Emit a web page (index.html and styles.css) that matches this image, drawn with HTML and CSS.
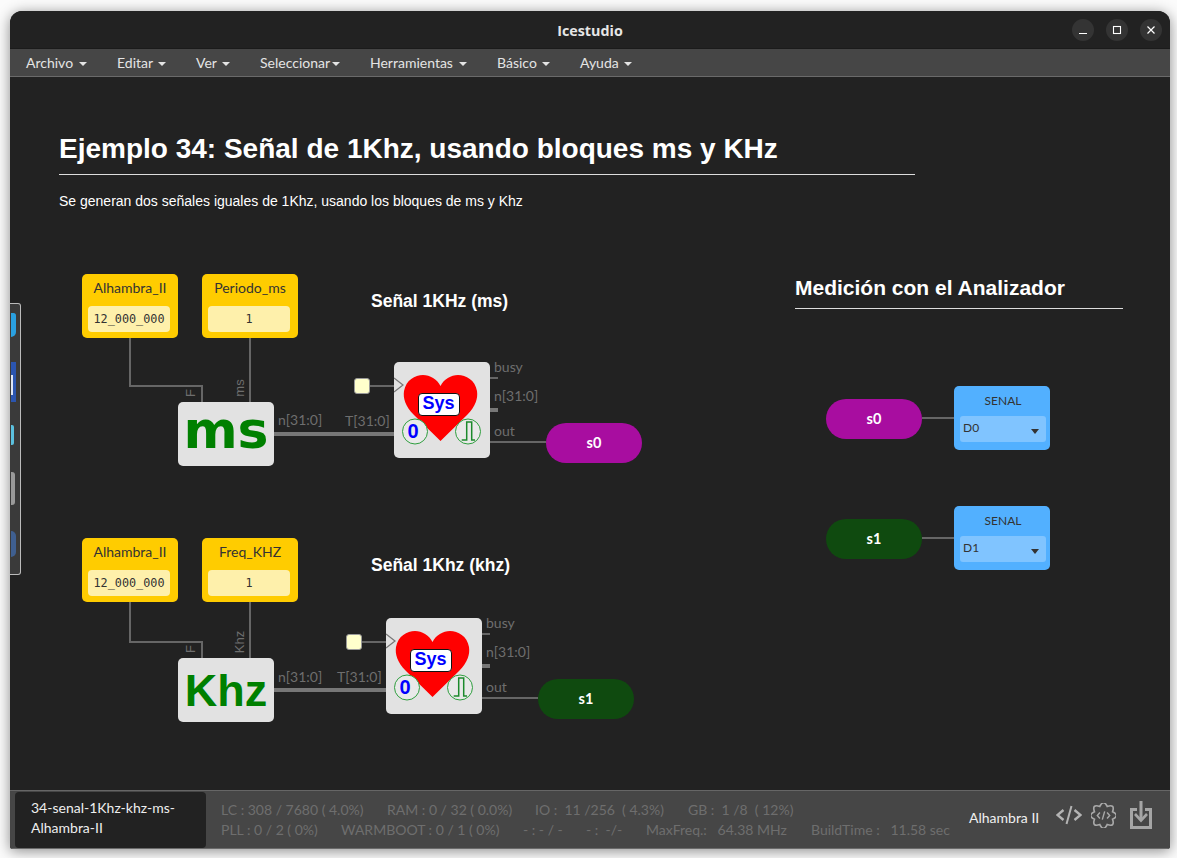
FILE: index.html
```html
<!DOCTYPE html>
<html lang="en">
<head>
    <meta charset="UTF-8">
    <meta name="viewport" content="width=device-width, initial-scale=1.0">
    <title>Icestudio</title>
    <link rel="stylesheet" href="styles.css">
</head>
<body>
    <div class="dock">
        <span class="dock-icon dock-a"></span>
        <span class="dock-icon dock-b"></span>
        <span class="dock-icon dock-c"></span>
        <span class="dock-icon dock-d"></span>
        <span class="dock-icon dock-e"></span>
    </div>

    <div class="window">
        <header class="titlebar">
            <span class="title">Icestudio</span>
            <div class="win-buttons">
                <button class="win-btn"><svg width="10" height="10" viewBox="0 0 10 10"><path d="M1 8.5h8" stroke="#fff" stroke-width="1.2"/></svg></button>
                <button class="win-btn"><svg width="10" height="10" viewBox="0 0 10 10"><rect x="1.5" y="1.5" width="7" height="7" fill="none" stroke="#fff" stroke-width="1.1"/></svg></button>
                <button class="win-btn"><svg width="10" height="10" viewBox="0 0 10 10"><path d="M1.5 1.5l7 7M8.5 1.5l-7 7" stroke="#fff" stroke-width="1.2"/></svg></button>
            </div>
        </header>

        <nav class="menubar">
            <a class="menu-item menu-archivo">Archivo <i class="caret"></i></a>
            <a class="menu-item menu-editar">Editar <i class="caret"></i></a>
            <a class="menu-item menu-ver">Ver <i class="caret"></i></a>
            <a class="menu-item menu-selec">Seleccionar<i class="caret"></i></a>
            <a class="menu-item menu-herr">Herramientas <i class="caret"></i></a>
            <a class="menu-item menu-basico">Básico <i class="caret"></i></a>
            <a class="menu-item">Ayuda <i class="caret"></i></a>
        </nav>

        <main class="canvas">
            <svg class="wires" width="1160" height="713" viewBox="10 77 1160 713" fill="none">
                <g stroke="#666" stroke-width="2">
                    <path d="M130 338V386H202V402"/>
                    <path d="M250 338V402"/>
                    <path d="M370 386H394"/>
                    <path d="M490 378H498"/>
                    <path d="M490 442H546"/>
                    <path d="M130 602V642H202V658"/>
                    <path d="M250 602V658"/>
                    <path d="M362 642H386"/>
                    <path d="M482 634H490"/>
                    <path d="M482 698H538"/>
                    <path d="M922 418H954"/>
                    <path d="M922 538H954"/>
                </g>
                <g stroke="#777" stroke-width="4">
                    <path d="M274 434H394"/>
                    <path d="M490 410H498"/>
                    <path d="M274 690H386"/>
                    <path d="M482 666H490"/>
                </g>
            </svg>

            <section class="note note-title">
                <h1>Ejemplo 34: Señal de 1Khz, usando bloques ms y KHz</h1>
                <p>Se generan dos señales iguales de 1Khz, usando los bloques de ms y Khz</p>
            </section>
            <h2 class="note-measure">Medición con el Analizador</h2>
            <h3 class="note-sub sub-ms">Señal 1KHz (ms)</h3>
            <h3 class="note-sub sub-khz">Señal 1Khz (khz)</h3>

            <div class="block constant c1"><span class="block-name">Alhambra_II</span><span class="const-value">12_000_000</span></div>
            <div class="block constant c2"><span class="block-name">Periodo_ms</span><span class="const-value">1</span></div>
            <div class="block constant c3"><span class="block-name">Alhambra_II</span><span class="const-value">12_000_000</span></div>
            <div class="block constant c4"><span class="block-name">Freq_KHZ</span><span class="const-value">1</span></div>

            <div class="block icon-block b-ms"><span class="word-ms">ms</span></div>
            <div class="block icon-block b-khz"><span class="word-khz">Khz</span></div>

            <div class="block timer t1">
                <svg class="timer-art" width="96" height="96" viewBox="0 0 96 96" fill="none">
                    <path d="M46.5 79L20 53C11 44 9 36 10 29C12 18 21 13 29 13C36 13 43 17 46.5 24C50 17 57 13 64 13C72 13 81 18 83 29C84 36 82 44 73 53Z" fill="#f00"/>
                    <path d="M0 16L9 23L0 30" stroke="#777" stroke-width="1.2"/>
                    <circle cx="21" cy="69.5" r="12.5" fill="#e9e9e9" stroke="#2e9e3e" stroke-width="1"/>
                    <circle cx="74" cy="69.5" r="12.5" fill="#e9e9e9" stroke="#2e9e3e" stroke-width="1"/>
                    <path d="M67.700 78H72.700V60H77.700V78H81" stroke="#1c8a2c" stroke-width="1.500"/>
                </svg>
                <span class="sys-label">Sys</span>
                <span class="zero-label">0</span>
            </div>
            <div class="block timer t2">
                <svg class="timer-art" width="96" height="96" viewBox="0 0 96 96" fill="none">
                    <path d="M46.5 79L20 53C11 44 9 36 10 29C12 18 21 13 29 13C36 13 43 17 46.5 24C50 17 57 13 64 13C72 13 81 18 83 29C84 36 82 44 73 53Z" fill="#f00"/>
                    <path d="M0 16L9 23L0 30" stroke="#777" stroke-width="1.2"/>
                    <circle cx="21" cy="69.5" r="12.5" fill="#e9e9e9" stroke="#2e9e3e" stroke-width="1"/>
                    <circle cx="74" cy="69.5" r="12.5" fill="#e9e9e9" stroke="#2e9e3e" stroke-width="1"/>
                    <path d="M67.700 78H72.700V60H77.700V78H81" stroke="#1c8a2c" stroke-width="1.500"/>
                </svg>
                <span class="sys-label">Sys</span>
                <span class="zero-label">0</span>
            </div>

            <span class="in-square sq1"></span>
            <span class="in-square sq2"></span>

            <div class="pill pill-purple p1">s0</div>
            <div class="pill pill-green p2">s1</div>
            <div class="pill pill-purple p3">s0</div>
            <div class="pill pill-green p4">s1</div>

            <div class="block output o1"><span class="output-name">SENAL</span><div class="pin-select"><span class="pin-text">D0</span><i class="pin-caret"></i></div></div>
            <div class="block output o2"><span class="output-name">SENAL</span><div class="pin-select"><span class="pin-text">D1</span><i class="pin-caret"></i></div></div>

            <span class="port l-n1">n[31:0]</span>
            <span class="port l-t1">T[31:0]</span>
            <span class="port l-busy1">busy</span>
            <span class="port l-no1">n[31:0]</span>
            <span class="port l-out1">out</span>
            <span class="port l-n2">n[31:0]</span>
            <span class="port l-t2">T[31:0]</span>
            <span class="port l-busy2">busy</span>
            <span class="port l-no2">n[31:0]</span>
            <span class="port l-out2">out</span>
            <span class="port vert l-f1">F</span>
            <span class="port vert l-ms">ms</span>
            <span class="port vert l-f2">F</span>
            <span class="port vert l-khz">Khz</span>
        </main>

        <footer class="statusbar">
            <div class="file-name">34-senal-1Khz-khz-ms-<br>Alhambra-II</div>
            <div class="stats">
                <div class="stats-row">
                    <span class="s-lc">LC : 308 / 7680 ( 4.0%)</span>
                    <span class="s-ram">RAM : 0 / 32 ( 0.0%)</span>
                    <span class="s-io">IO :  11 /256  ( 4.3%)</span>
                    <span>GB :  1 /8  ( 12%)</span>
                </div>
                <div class="stats-row">
                    <span class="s-pll">PLL : 0 / 2 ( 0%)</span>
                    <span class="s-warm">WARMBOOT : 0 / 1 ( 0%)</span>
                    <span class="s-dash1">- : - / -</span>
                    <span class="s-dash2">- :  -/-</span>
                    <span class="s-max">MaxFreq.:   64.38 MHz</span>
                    <span>BuildTime :   11.58 sec</span>
                </div>
            </div>
            <span class="board-name">Alhambra II</span>
            <div class="tools">
                <svg class="tool-code" width="26" height="20" viewBox="0 0 26 20" fill="none" stroke="#b4b4b4" stroke-width="2.4"><path d="M7.500 5L1.500 10L7.500 15M18.500 5L24.500 10L18.500 15"/><path d="M15.500 1L10.500 19" stroke-width="2"/></svg>
                <svg class="tool-gear" width="25" height="25" viewBox="1.500 1.500 21 21" fill="none" stroke="#a8a8a8" stroke-width="1.400"><path d="M19.600 8.900Q26 12 19.600 15.100Q21.900 21.900 15.100 19.600Q12 26 8.900 19.600Q2.100 21.900 4.400 15.100Q-2 12 4.400 8.900Q2.100 2.100 8.900 4.400Q12 -2 15.100 4.400Q21.900 2.100 19.600 8.900Z"/><path d="M9 9.500L6.800 12L9 14.500M15 9.500L17.200 12L15 14.500M13 8.500L11 15.500" stroke-width="1.200"/></svg>
                <svg class="tool-save" width="24" height="30" viewBox="0 0 24 30" fill="none" stroke="#a5a5a5" stroke-width="3"><path d="M8 9.500H2.500V27.500H21.500V9.500H16"/><path d="M12 1V19" /><path d="M6 14L12 20.500L18 14" stroke-width="2.600"/></svg>
            </div>
        </footer>
    </div>
</body>
</html>
```
FILE: styles.css
```css
* {
    box-sizing: border-box;
}
body {
    margin: 0;
    height: 858px;
    padding: 11px 7px 9px 10px;
    background: #fbfbfb;
    font-family: Lato, sans-serif;
    overflow: hidden;
}
.window {
    width: 1160px;
    height: 838px;
    display: flex;
    flex-direction: column;
    background: #222;
    border-radius: 12px 12px 3px 3px;
    box-shadow: 0 2px 14px rgba(0, 0, 0, 0.45);
    overflow: hidden;
}

/* title bar */
.titlebar {
    height: 38px;
    flex: none;
    display: flex;
    align-items: center;
    justify-content: flex-end;
    position: relative;
    background: #222;
    border-bottom: 1px solid #1b1b1b;
    padding: 0 8px 0 0;
}
.title {
    position: absolute;
    left: 0;
    right: 0;
    margin-top: 2px;
    text-align: center;
    color: #e6e6e6;
    font-family: "Open Sans", sans-serif;
    font-size: 14.3px;
    font-weight: 700;
}
.win-buttons {
    display: flex;
    gap: 12px;
}
.win-btn {
    width: 22px;
    height: 22px;
    padding: 0;
    border: none;
    border-radius: 50%;
    background: #343434;
    display: flex;
    align-items: center;
    justify-content: center;
}

/* menu */
.menubar {
    height: 28px;
    flex: none;
    display: flex;
    align-items: center;
    padding-left: 16px;
    background: #464646;
    border-bottom: 1px solid #6a6a6a;
    color: #e4e4e4;
    font-size: 14px;
}
.menu-item {
    white-space: nowrap;
}
.menu-archivo { width: 91px; }
.menu-editar { width: 79px; }
.menu-ver { width: 64px; }
.menu-selec { width: 110px; }
.menu-herr { width: 127px; }
.menu-basico { width: 83px; }
.caret {
    display: inline-block;
    width: 0;
    height: 0;
    margin-left: 2px;
    vertical-align: 2px;
    border-top: 4px solid #e4e4e4;
    border-left: 4px solid transparent;
    border-right: 4px solid transparent;
}

/* canvas: blocks sit on a free drawing surface, page x-10 / y-77 */
.canvas {
    flex: 1;
    position: relative;
    background: #222;
}
.wires {
    position: absolute;
    left: 0;
    top: 0;
}
.note-title {
    position: absolute;
    left: 49px;
    top: 53px;
    width: 856px;
    color: #fff;
    font-family: "Liberation Sans", Arial, sans-serif;
}
.note-title h1 {
    margin: 0;
    height: 45px;
    border-bottom: 1px solid #ddd;
    font-size: 28px;
    line-height: 38px;
}
.note-title p {
    margin: 16px 0 0;
    font-size: 14px;
    line-height: 20px;
}
.note-measure {
    position: absolute;
    left: 785px;
    top: 196px;
    width: 328px;
    height: 36px;
    margin: 0;
    border-bottom: 1px solid #ddd;
    color: #fff;
    font-family: "Liberation Sans", Arial, sans-serif;
    font-size: 21px;
    line-height: 30px;
}
.note-sub {
    position: absolute;
    left: 361px;
    margin: 0;
    color: #fff;
    font-family: "Liberation Sans", Arial, sans-serif;
    font-size: 17.5px;
    line-height: 22px;
}
.sub-ms { top: 213px; }
.sub-khz { top: 477px; }

.block {
    position: absolute;
    width: 96px;
    border-radius: 5px;
}
.constant {
    height: 64px;
    padding: 5px 6px 6px;
    display: flex;
    flex-direction: column;
    justify-content: space-between;
    align-items: stretch;
    background: #fc0;
    color: #333;
    text-align: center;
}
.block-name {
    font-size: 14px;
    line-height: 17px;
}
.const-value {
    height: 26px;
    margin-right: 2px;
    background: #fef0ab;
    border-radius: 4px;
    font-family: "DejaVu Sans Mono", monospace;
    font-size: 11.8px;
    line-height: 26px;
}
.c1 { left: 72px; top: 197px; }
.c2 { left: 192px; top: 197px; }
.c3 { left: 72px; top: 461px; }
.c4 { left: 192px; top: 461px; }

.icon-block {
    height: 64px;
    background: #e2e2e2;
    color: #008000;
    font-weight: 700;
    text-align: center;
}
.word-ms {
    display: block;
    font-family: "DejaVu Sans", sans-serif;
    font-size: 52px;
    line-height: 56px;
}
.word-khz {
    display: block;
    font-family: "Liberation Sans", sans-serif;
    font-size: 45px;
    line-height: 65px;
}
.b-ms { left: 168px; top: 325px; }
.b-khz { left: 168px; top: 581px; }

.timer {
    height: 96px;
    background: #e2e2e2;
    font-family: "Liberation Sans", sans-serif;
    font-weight: 700;
    color: #00f;
}
.t1 { left: 384px; top: 285px; }
.t2 { left: 376px; top: 541px; }
.timer-art {
    display: block;
}
.sys-label {
    position: absolute;
    left: 23.500px;
    top: 30.500px;
    width: 42px;
    height: 23px;
    background: #fff;
    border: 1.5px solid #111;
    border-radius: 4px;
    font-size: 18px;
    line-height: 18px;
    text-align: center;
}
.zero-label {
    position: absolute;
    left: 9px;
    top: 58px;
    width: 20px;
    font-size: 20px;
    line-height: 23px;
    text-align: center;
}
.in-square {
    position: absolute;
    width: 16px;
    height: 16px;
    background: #ffffcc;
    border: 1px solid #999;
    border-radius: 3px;
}
.sq1 { left: 344px; top: 301px; }
.sq2 { left: 336px; top: 557px; }

.pill {
    position: absolute;
    width: 96px;
    height: 40px;
    border-radius: 20px;
    color: #fff;
    font-size: 14.5px;
    font-weight: 700;
    line-height: 40px;
    text-align: center;
}
.pill-purple { background: #a80da0; }
.pill-green { background: #0f4a0f; }
.p1 { left: 536px; top: 346px; }
.p2 { left: 528px; top: 602px; }
.p3 { left: 816px; top: 322px; }
.p4 { left: 816px; top: 442px; }

.output {
    height: 64px;
    padding: 7px 4px 8px 6px;
    display: flex;
    flex-direction: column;
    justify-content: space-between;
    background: #52b0ff;
    color: #333;
}
.output-name {
    font-size: 12px;
    line-height: 15px;
    text-align: center;
}
.pin-select {
    height: 26px;
    padding: 0 7px 0 3px;
    display: flex;
    align-items: center;
    justify-content: space-between;
    background: #80c4ff;
    border-radius: 3px;
    font-size: 12px;
}
.pin-text {
    margin-bottom: 3px;
}
.pin-caret {
    margin-top: 4px;
    border-top: 5px solid #333;
    border-left: 4px solid transparent;
    border-right: 4px solid transparent;
}
.o1 { left: 944px; top: 309px; }
.o2 { left: 944px; top: 429px; }

.port {
    position: absolute;
    color: #6e6e6e;
    font-size: 14px;
    line-height: 16px;
    white-space: nowrap;
}
.vert {
    transform: translate(-50%, -50%) rotate(-90deg);
    font-family: "Liberation Sans", sans-serif;
    font-size: 13px;
}
.l-n1 { left: 268px; top: 335px; }
.l-t1 { left: 335px; top: 336px; }
.l-busy1 { left: 484px; top: 282px; }
.l-no1 { left: 484px; top: 311px; }
.l-out1 { left: 484px; top: 346px; }
.l-n2 { left: 268px; top: 592px; }
.l-t2 { left: 327px; top: 592px; }
.l-busy2 { left: 476px; top: 538px; }
.l-no2 { left: 476px; top: 567px; }
.l-out2 { left: 476px; top: 602px; }
.l-f1 { left: 181px; top: 316px; }
.l-ms { left: 230px; top: 311px; }
.l-f2 { left: 181px; top: 572px; }
.l-khz { left: 230px; top: 565px; }

/* status bar */
.statusbar {
    height: 59px;
    flex: none;
    display: flex;
    align-items: center;
    padding: 0 17px 0 5px;
    background: #464646;
    border-top: 1px solid #666;
    border-bottom: 1px solid #6a6a6a;
}
.file-name {
    width: 191px;
    height: 56px;
    padding: 6px 0 0 16px;
    background: #222;
    border-radius: 4px;
    color: #eee;
    font-size: 14px;
    line-height: 20px;
}
.stats {
    width: 748px;
    margin-left: 15px;
    color: #6e6e6e;
    font-size: 14px;
    line-height: 20px;
}
.stats-row {
    display: flex;
}
.stats-row span {
    white-space: pre;
}
.s-lc { width: 166px; }
.s-ram { width: 148px; }
.s-io { width: 153px; }
.s-pll { width: 120px; }
.s-warm { width: 182px; }
.s-dash1 { width: 63px; }
.s-dash2 { width: 60px; }
.s-max { width: 165px; }
.board-name {
    margin-bottom: 4px;
    color: #f0f0f0;
    font-size: 14px;
}
.tools {
    margin-left: auto;
    margin-bottom: 9px;
    display: flex;
    align-items: center;
}
.tool-gear {
    margin-left: 9px;
}
.tool-save {
    margin-left: 13px;
}

/* sliver of the desktop dock over the window edge */
.dock {
    position: absolute;
    left: 10px;
    top: 303px;
    width: 11px;
    height: 272px;
    display: flex;
    flex-direction: column;
    align-items: flex-start;
    padding-left: 1px;
    background: #3a3a3a;
    border: 1px solid #bbb;
    border-left: none;
    border-radius: 0 3px 3px 0;
    z-index: 5;
}
.dock-icon {
    display: block;
}
.dock-a { width: 5px; height: 24px; margin-top: 9px; background: #2aa0e0; border-radius: 0 4px 8px 0; }
.dock-b { width: 5px; height: 40px; margin-top: 25px; background: linear-gradient(#dfe6f5, #dfe6f5) 0 13px / 2px 20px no-repeat, #2b55b0; }
.dock-c { width: 3px; height: 20px; margin-top: 23px; background: #5bc0de; border-radius: 0 2px 2px 0; }
.dock-d { width: 4px; height: 33px; margin-top: 27px; background: #999; border-radius: 0 3px 3px 0; }
.dock-e { width: 5px; height: 26px; margin-top: 26px; background: #3f5f90; border-radius: 0 13px 13px 0; }
```
